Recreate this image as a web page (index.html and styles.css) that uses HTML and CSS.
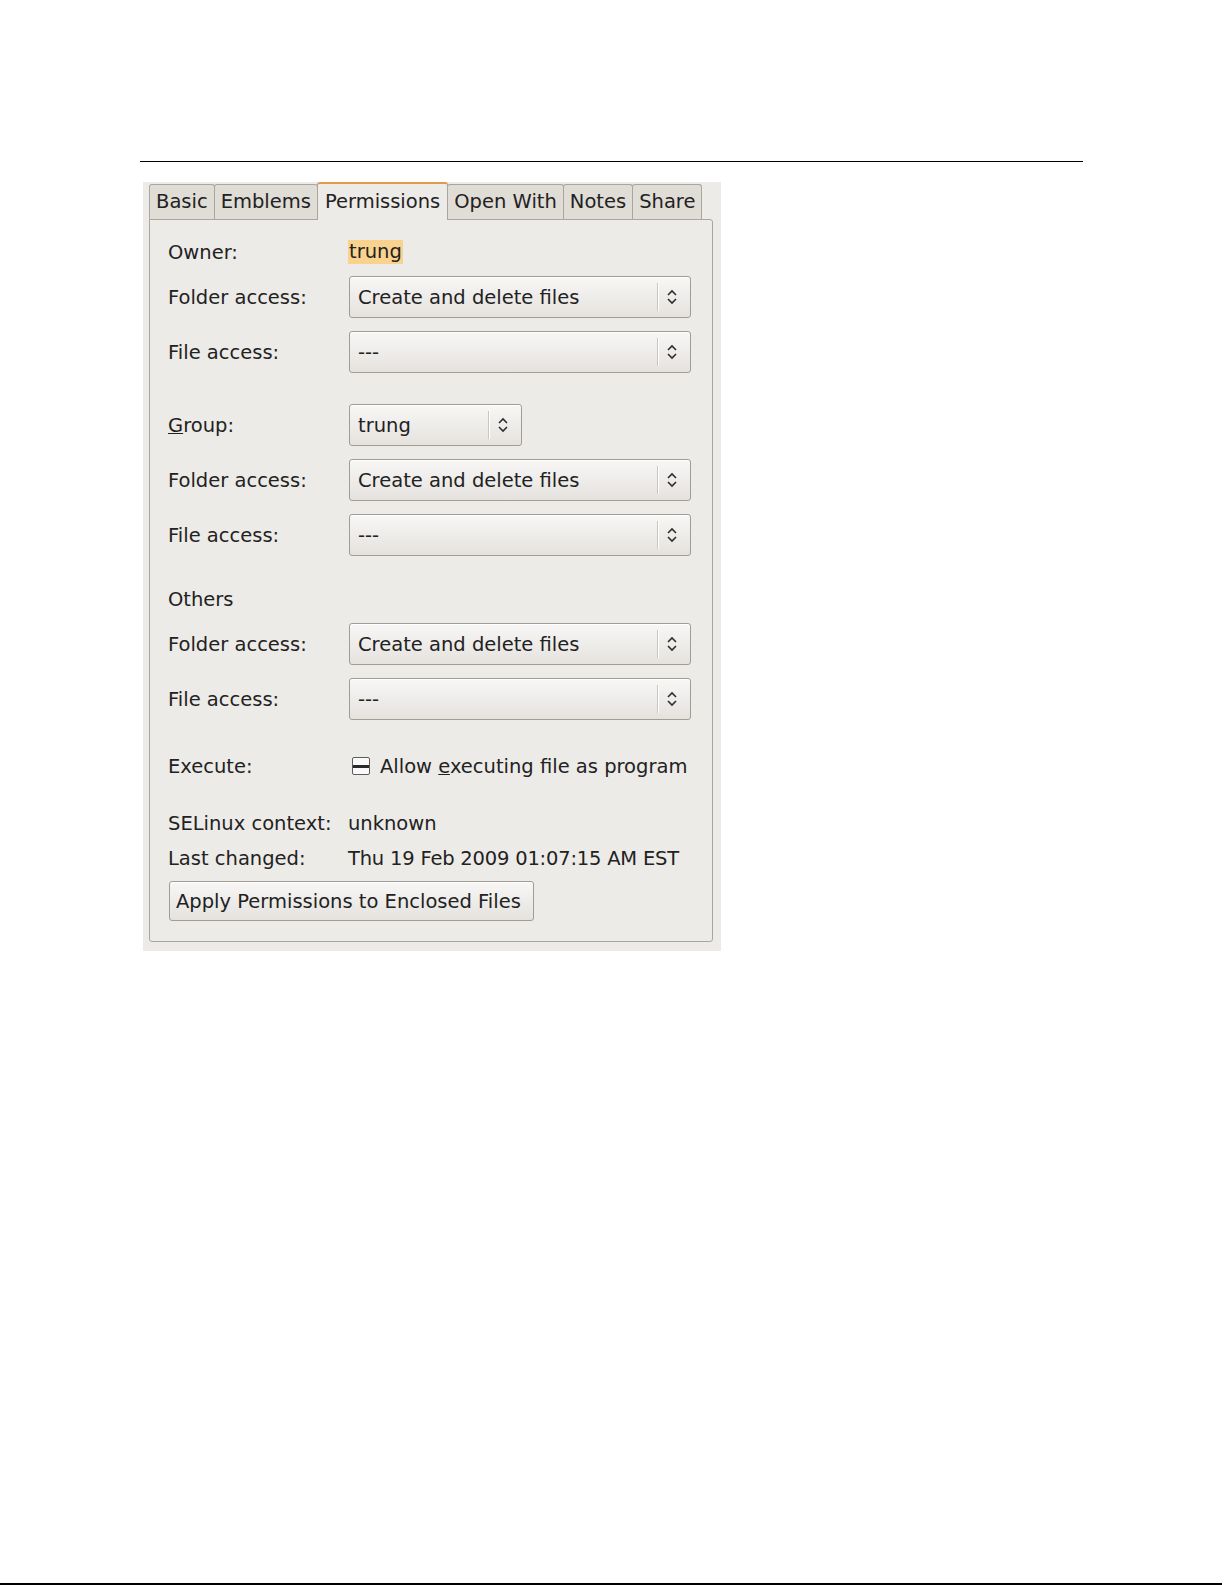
FILE: index.html
```html
<!DOCTYPE html>
<html lang="en">
<head>
<meta charset="UTF-8">
<meta name="viewport" content="width=device-width, initial-scale=1.0">
<title>Properties - Permissions</title>
<link rel="stylesheet" href="styles.css">
</head>
<body>
<div class="page">
  <div class="rule-top"></div>

  <div class="dialog">
    <div class="tabs">
      <span class="tab">Basic</span>
      <span class="tab">Emblems</span>
      <span class="tab active">Permissions</span>
      <span class="tab">Open With</span>
      <span class="tab">Notes</span>
      <span class="tab">Share</span>
    </div>

    <div class="panel">
      <div class="row text-row first">
        <span class="label">Owner:</span>
        <span class="owner-name">trung</span>
      </div>
      <div class="row combo-row gap-s">
        <span class="label">Folder access:</span>
        <div class="combo wide">
          <span class="combo-text">Create and delete files</span>
          <span class="combo-arrow"><svg width="12" height="18" viewBox="0 0 12 18"><path d="M2 7 L6 3 L10 7 M2 11 L6 15 L10 11" fill="none" stroke="#2e2e2e" stroke-width="1.6"/></svg></span>
        </div>
      </div>
      <div class="row combo-row gap-m">
        <span class="label">File access:</span>
        <div class="combo wide">
          <span class="combo-text">---</span>
          <span class="combo-arrow"><svg width="12" height="18" viewBox="0 0 12 18"><path d="M2 7 L6 3 L10 7 M2 11 L6 15 L10 11" fill="none" stroke="#2e2e2e" stroke-width="1.6"/></svg></span>
        </div>
      </div>

      <div class="row combo-row gap-l">
        <span class="label"><u>G</u>roup:</span>
        <div class="combo narrow">
          <span class="combo-text">trung</span>
          <span class="combo-arrow"><svg width="12" height="18" viewBox="0 0 12 18"><path d="M2 7 L6 3 L10 7 M2 11 L6 15 L10 11" fill="none" stroke="#2e2e2e" stroke-width="1.6"/></svg></span>
        </div>
      </div>
      <div class="row combo-row gap-m">
        <span class="label">Folder access:</span>
        <div class="combo wide">
          <span class="combo-text">Create and delete files</span>
          <span class="combo-arrow"><svg width="12" height="18" viewBox="0 0 12 18"><path d="M2 7 L6 3 L10 7 M2 11 L6 15 L10 11" fill="none" stroke="#2e2e2e" stroke-width="1.6"/></svg></span>
        </div>
      </div>
      <div class="row combo-row gap-m">
        <span class="label">File access:</span>
        <div class="combo wide">
          <span class="combo-text">---</span>
          <span class="combo-arrow"><svg width="12" height="18" viewBox="0 0 12 18"><path d="M2 7 L6 3 L10 7 M2 11 L6 15 L10 11" fill="none" stroke="#2e2e2e" stroke-width="1.6"/></svg></span>
        </div>
      </div>

      <div class="row text-row gap-l">
        <span class="label">Others</span>
      </div>
      <div class="row combo-row gap-s">
        <span class="label">Folder access:</span>
        <div class="combo wide">
          <span class="combo-text">Create and delete files</span>
          <span class="combo-arrow"><svg width="12" height="18" viewBox="0 0 12 18"><path d="M2 7 L6 3 L10 7 M2 11 L6 15 L10 11" fill="none" stroke="#2e2e2e" stroke-width="1.6"/></svg></span>
        </div>
      </div>
      <div class="row combo-row gap-m">
        <span class="label">File access:</span>
        <div class="combo wide">
          <span class="combo-text">---</span>
          <span class="combo-arrow"><svg width="12" height="18" viewBox="0 0 12 18"><path d="M2 7 L6 3 L10 7 M2 11 L6 15 L10 11" fill="none" stroke="#2e2e2e" stroke-width="1.6"/></svg></span>
        </div>
      </div>

      <div class="row text-row gap-exec">
        <span class="label">Execute:</span>
        <span class="check-line">
          <span class="checkbox"><span class="check-dash"></span></span>
          <span>Allow <u>e</u>xecuting file as program</span>
        </span>
      </div>

      <div class="row text-row gap-xl">
        <span class="label">SELinux context:</span>
        <span class="value">unknown</span>
      </div>
      <div class="row text-row gap-xs">
        <span class="label">Last changed:</span>
        <span class="value date">Thu 19 Feb 2009 01:07:15 AM EST</span>
      </div>

      <div class="button-row">
        <button class="apply-button">Apply Permissions to Enclosed Files</button>
      </div>
    </div>
  </div>

  <div class="rule-bottom"></div>
</div>
</body>
</html>
```

FILE: styles.css
```css
/* Page */
body {
    margin: 0;
    background-color: #fff;
    font-family: "DejaVu Sans", "Liberation Sans", sans-serif;
    color: #222;
}

.page {
    height: 1585px;
    display: flex;
    flex-direction: column;
}

.rule-top {
    margin-top: 161px;
    margin-left: 140px;
    width: 943px;
    height: 1px;
    background-color: #000;
}

.rule-bottom {
    margin-top: auto;
    width: 1222px;
    height: 2px;
    background-color: #000;
}

/* Dialog screenshot */
.dialog {
    margin-top: 20px;
    margin-left: 143px;
    width: 578px;
    height: 769px;
    background-color: #edebe8;
    font-size: 19.5px;
}

/* Notebook tabs */
.tabs {
    display: flex;
    align-items: flex-end;
    height: 37px;
    padding-left: 6px;
    position: relative;
    z-index: 1;
}

.tab {
    height: 34px;
    line-height: 33px;
    padding: 0 6px;
    background-color: #e0dcd6;
    border: 1px solid #aaa69f;
    border-bottom: none;
    border-radius: 3px 3px 0 0;
    margin-right: -1px;
}

.tab.active {
    height: 36px;
    line-height: 35px;
    padding: 0 7px;
    margin-bottom: -1px;
    background-color: #edebe8;
    border-top: 2px solid #e3994a;
}

/* Notebook page */
.panel {
    box-sizing: border-box;
    margin-left: 6px;
    width: 564px;
    height: 723px;
    border: 1px solid #aaa69f;
    border-radius: 0 3px 3px 3px;
    padding: 0 0 0 18px;
}

.row {
    display: flex;
    align-items: center;
}

.text-row {
    height: 24px;
}

.combo-row {
    height: 42px;
}

.first { margin-top: 20px; }
.gap-xs { margin-top: 11px; }
.gap-s { margin-top: 12px; }
.gap-m { margin-top: 13px; }
.gap-l { margin-top: 31px; }
.gap-exec { margin-top: 34px; }
.gap-xl { margin-top: 33px; }

.label {
    width: 181px;
    flex-shrink: 0;
}

.owner-name {
    background-color: #f9d38e;
    padding: 0 1px;
    margin-left: -1px;
    line-height: 24px;
}

.value {
    margin-left: -1px;
}

.date {
    letter-spacing: -0.2px;
}

/* Combo boxes */
.combo {
    height: 42px;
    box-sizing: border-box;
    display: flex;
    align-items: center;
    border: 1px solid #a19d96;
    border-radius: 3px;
    background: linear-gradient(#f8f7f6, #e5e2de);
    box-shadow: inset 0 1px 0 #fff;
}

.combo.wide { width: 342px; }
.combo.narrow { width: 173px; }

.combo-text {
    flex: 1;
    padding-left: 8px;
}

.combo-arrow {
    width: 28px;
    height: 28px;
    padding-right: 4px;
    display: flex;
    align-items: center;
    justify-content: center;
    border-left: 1px solid #c9c5bf;
    box-shadow: inset 1px 0 0 #fff;
}

/* Execute checkbox */
.check-line {
    display: flex;
    align-items: center;
    margin-left: 3px;
}

.checkbox {
    width: 16px;
    height: 16px;
    border: 1px solid #5e5c58;
    border-radius: 2px;
    background-color: #fafafa;
    margin-right: 10px;
    display: flex;
    align-items: center;
}

.check-dash {
    width: 16px;
    height: 3px;
    background-color: #2a2a2a;
}

/* Apply button */
.button-row {
    margin-top: 11px;
}

.apply-button {
    font-family: inherit;
    font-size: inherit;
    color: inherit;
    height: 40px;
    width: 365px;
    margin-left: 1px;
    padding: 0 6px;
    text-align: left;
    border: 1px solid #a19d96;
    border-radius: 3px;
    background: linear-gradient(#f8f7f6, #e5e2de);
    box-shadow: inset 0 1px 0 #fff;
}
```
